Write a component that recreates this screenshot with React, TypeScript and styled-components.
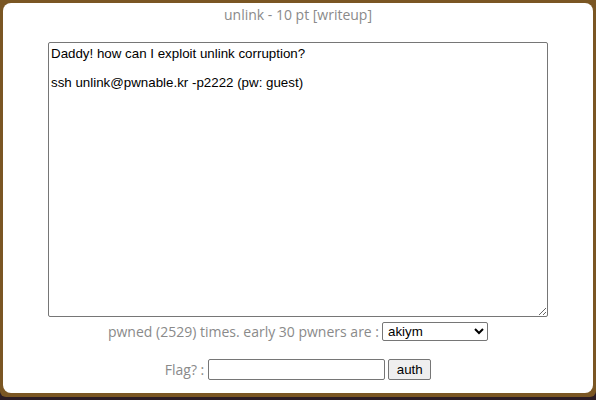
import React from "react";
import styled, { createGlobalStyle } from "styled-components";

const Global = createGlobalStyle`
  html, body { margin: 0; padding: 0; }
  body {
    background: #2b1c24;
    width: 596px;
    height: 400px;
    overflow: hidden;
  }
`;

const Frame = styled.div`
  width: 596px;
  height: 397px;
  background: #7a5623;
  box-sizing: border-box;
  padding: 3px 3px 4px 3px;
  border-radius: 0 0 6px 6px;
`;

const Panel = styled.div`
  height: 100%;
  background: #ffffff;
  border-radius: 8px;
  display: flex;
  flex-direction: column;
  align-items: center;
  font-family: "Open Sans", "Noto Sans", sans-serif;
  color: #8a8a8a;
`;

const Title = styled.div`
  margin-top: 2px;
  font-size: 14px;
  line-height: 20px;
  height: 20px;
`;

const Description = styled.textarea`
  margin-top: 17px;
  width: 500px;
  height: 275px;
  box-sizing: border-box;
  border: 1px solid #767676;
  border-radius: 2px;
  padding: 4px 2px 2px;
  font-family: "Liberation Sans", Arial, sans-serif;
  font-size: 13.33px;
  line-height: 14.7px;
  color: #000;
  resize: both;
  outline: none;
`;

const Row = styled.div<{ $top: number }>`
  margin-top: ${(p) => p.$top}px;
  display: flex;
  align-items: center;
  gap: 3px;
  font-size: 14px;
`;

const Select = styled.select`
  width: 106px;
  height: 19px;
  box-sizing: border-box;
  border: 1px solid #767676;
  border-radius: 2px;
  font-family: "Liberation Sans", Arial, sans-serif;
  font-size: 13.33px;
  color: #000;
  background: #fff;
  padding: 0 0 0 1px;
`;

const FlagInput = styled.input`
  width: 177px;
  height: 21px;
  box-sizing: border-box;
  border: 1px solid #767676;
  border-radius: 2px;
  margin-left: 1px;
  padding: 1px 2px;
  font-family: "Liberation Sans", Arial, sans-serif;
  font-size: 13.33px;
`;

const AuthButton = styled.button`
  width: 43px;
  height: 21px;
  box-sizing: border-box;
  border: 1px solid #767676;
  border-radius: 2px;
  background: #efefef;
  padding: 1px 6px;
  font-family: "Liberation Sans", Arial, sans-serif;
  font-size: 13.33px;
  color: #000;
`;

export default function App() {
  return (
    <>
      <Global />
      <Frame>
        <Panel>
          <Title>unlink - 10 pt [writeup]</Title>
          <Description
            readOnly
            defaultValue={
              "Daddy! how can I exploit unlink corruption?\n\nssh unlink@pwnable.kr -p2222 (pw: guest)"
            }
          />
          <Row $top={5}>
            <span>pwned (2529) times. early 30 pwners are :</span>
            <Select defaultValue="akiym">
              <option value="akiym">akiym</option>
            </Select>
          </Row>
          <Row $top={18}>
            <span>Flag? :</span>
            <FlagInput type="text" />
            <AuthButton>auth</AuthButton>
          </Row>
        </Panel>
      </Frame>
    </>
  );
}
